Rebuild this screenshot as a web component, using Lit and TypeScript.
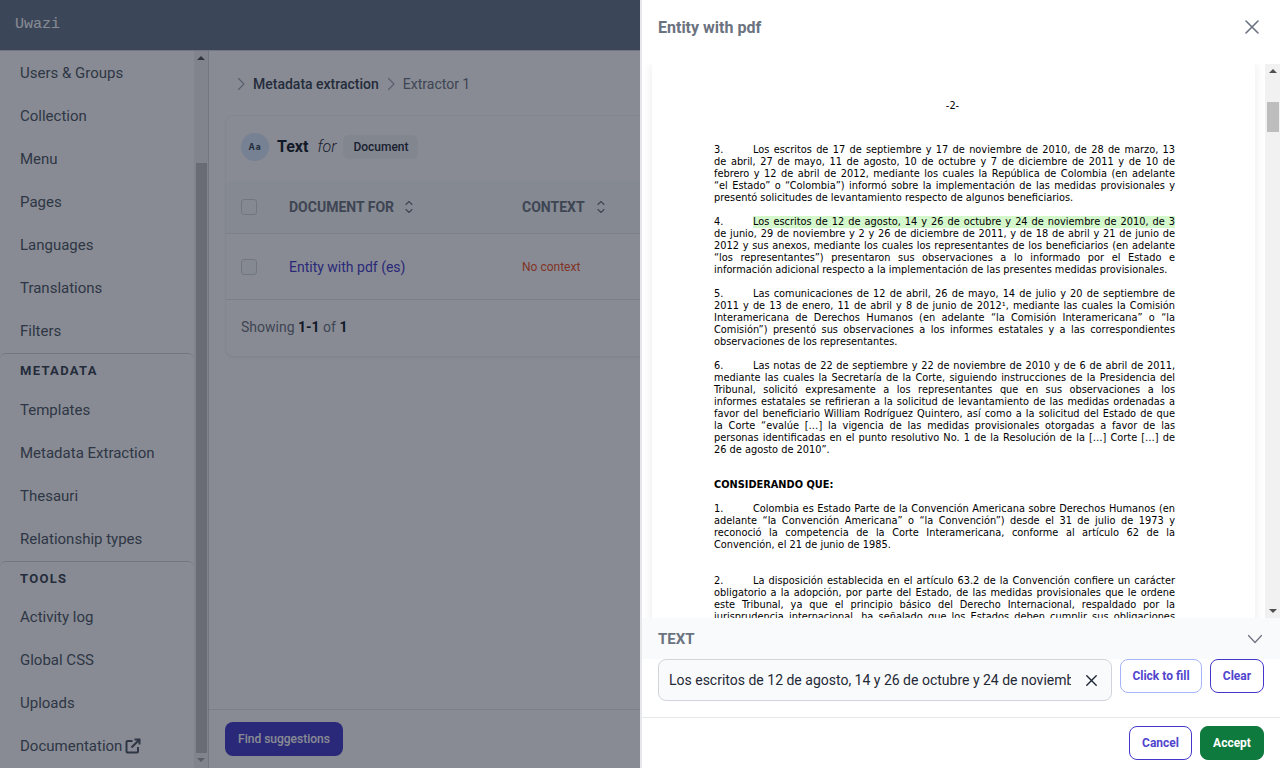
import { LitElement, html, css, svg } from "lit";
import { customElement } from "lit/decorators.js";

type Para = { lines: string[]; gap: number; indentNum?: string };

const paras: Para[] = [
  { gap: 0, indentNum: "3.", lines: [
    "Los escritos de 17 de septiembre y 17 de noviembre de 2010, de 28 de marzo, 13",
    "de abril, 27 de mayo, 11 de agosto, 10 de octubre y 7 de diciembre de 2011 y de 10 de",
    "febrero y 12 de abril de 2012, mediante los cuales la República de Colombia (en adelante",
    "“el Estado” o “Colombia”) informó sobre la implementación de las medidas provisionales y",
    "presentó solicitudes de levantamiento respecto de algunos beneficiarios."] },
  { gap: 12, indentNum: "4.", lines: [
    "@Los escritos de 12 de agosto, 14 y 26 de octubre y 24 de noviembre de 2010, de 3",
    "de junio, 29 de noviembre y 2 y 26 de diciembre de 2011, y de 18 de abril y 21 de junio de",
    "2012 y sus anexos, mediante los cuales los representantes de los beneficiarios (en adelante",
    "“los representantes”) presentaron sus observaciones a lo informado por el Estado e",
    "información adicional respecto a la implementación de las presentes medidas provisionales."] },
  { gap: 12, indentNum: "5.", lines: [
    "Las comunicaciones de 12 de abril, 26 de mayo, 14 de julio y 20 de septiembre de",
    "2011 y de 13 de enero, 11 de abril y 8 de junio de 2012¹, mediante las cuales la Comisión",
    "Interamericana de Derechos Humanos (en adelante “la Comisión Interamericana” o “la",
    "Comisión”) presentó sus observaciones a los informes estatales y a las correspondientes",
    "observaciones de los representantes."] },
  { gap: 12, indentNum: "6.", lines: [
    "Las notas de 22 de septiembre y 22 de noviembre de 2010 y de 6 de abril de 2011,",
    "mediante las cuales la Secretaría de la Corte, siguiendo instrucciones de la Presidencia del",
    "Tribunal, solicitó expresamente a los representantes que en sus observaciones a los",
    "informes estatales se refirieran a la solicitud de levantamiento de las medidas ordenadas a",
    "favor del beneficiario William Rodríguez Quintero, así como a la solicitud del Estado de que",
    "la Corte “evalúe […] la vigencia de las medidas provisionales otorgadas a favor de las",
    "personas identificadas en el punto resolutivo No. 1 de la Resolución de la […] Corte […] de",
    "26 de agosto de 2010”."] },
  { gap: 23, lines: ["#CONSIDERANDO QUE:"] },
  { gap: 12, indentNum: "1.", lines: [
    "Colombia es Estado Parte de la Convención Americana sobre Derechos Humanos (en",
    "adelante “la Convención Americana” o “la Convención”) desde el 31 de julio de 1973 y",
    "reconoció la competencia de la Corte Interamericana, conforme al artículo 62 de la",
    "Convención, el 21 de junio de 1985."] },
  { gap: 24, indentNum: "2.", lines: [
    "La disposición establecida en el artículo 63.2 de la Convención confiere un carácter",
    "obligatorio a la adopción, por parte del Estado, de las medidas provisionales que le ordene",
    "este Tribunal, ya que el principio básico del Derecho Internacional, respaldado por la",
    "jurisprudencia internacional, ha señalado que los Estados deben cumplir sus obligaciones"] },
];

const sort = svg`<svg class="sort" viewBox="0 0 10 16" width="10" height="16" fill="none" stroke="currentColor" stroke-width="1.1" stroke-linecap="round" stroke-linejoin="round"><path d="M2 5.5L5 2.5 8 5.5M2 10.5L5 13.5 8 10.5"/></svg>`;
const chev = svg`<svg class="chev" viewBox="0 0 8 14" width="8" height="14" fill="none" stroke="currentColor" stroke-width="1.1" stroke-linecap="round" stroke-linejoin="round"><path d="M1.5 1.5L7 7l-5.5 5.5"/></svg>`;
const x = (s: number, w = 1.6) => svg`<svg viewBox="0 0 14 14" width=${s} height=${s} fill="none" stroke="currentColor" stroke-width=${w} stroke-linecap="round"><path d="M1 1l12 12M13 1L1 13"/></svg>`;

@customElement("app-root")
export class AppRoot extends LitElement {
  static styles = css`
    :host { display: block; width: 1280px; height: 768px; position: relative; overflow: hidden; font-family: Roboto, sans-serif; background: #fff; }
    * { box-sizing: border-box; }
    .app { display: flex; flex-direction: column; height: 768px; }
    .nav { height: 51px; flex: none; background: #64748b; color: #fff; display: flex; align-items: center; padding: 0 0 2px 15px; font: 15px "Liberation Mono", monospace; border-bottom: 1px solid #d1d5db; }
    .body { flex: 1; display: flex; min-height: 0; }
    .side { width: 209px; flex: none; display: flex; border-right: 1px solid #d1d5db; background: #fff; overflow: hidden; }
    .menu { width: 194px; flex: none; }
    .item { height: 43px; display: flex; align-items: center; padding-left: 20px; font-size: 15px; color: #4b5563; gap: 3px; }
    .group { height: 35px; margin-top: 1px; border-top: 1px solid #d1d5db; border-radius: 6px 6px 0 0; padding: 9px 0 0 20px; font-size: 13px; line-height: 15px; font-weight: 700; letter-spacing: 1.3px; color: #374151; }
    .group.tools { height: 34px; }
    .sbar { width: 14px; flex: none; background: #f1f1f1; display: flex; flex-direction: column; align-items: center; }
    .tri-u { width: 0; height: 0; border: 4px solid transparent; border-top: 0; border-bottom: 4px solid #505050; }
    .tri-d { width: 0; height: 0; border: 4px solid transparent; border-bottom: 0; border-top: 4px solid #505050; }
    .side .tri-u { margin-top: 5px; }
    .side .thumb { margin-top: 103px; width: 11px; height: 590px; background: #c1c1c1; }
    .side .tri-d { margin-top: 5px; border-top-color: #a3a3a3; }
    .main { flex: 1; display: flex; flex-direction: column; min-width: 0; background: #fff; }
    .content { flex: 1; padding: 0 0 0 16px; min-height: 0; overflow: hidden; }
    .crumbs { height: 64px; display: flex; align-items: center; padding: 2px 0 0 12px; font-size: 14px; color: #6b7280; gap: 8px; }
    .crumbs b { font-weight: 500; color: #374151; }
    .chev { color: #9ca3af; }
    .card { width: 700px; height: 242px; border: 1px solid #f3f4f6; border-radius: 8px; box-shadow: 0 1px 2px rgba(0,0,0,.06); background: #fff; }
    .cap { height: 65px; display: flex; align-items: center; padding: 0 0 4px 15px; }
    .av { width: 28px; height: 28px; border-radius: 50%; background: #dbeafe; color: #374151; font-family: Inter, Roboto, sans-serif; font-size: 8.5px; font-weight: 700; display: flex; align-items: center; justify-content: center; letter-spacing: .9px; }
    .cap .t { font-size: 16px; font-weight: 700; color: #111827; margin-left: 8px; }
    .cap i { font-size: 16px; font-weight: 300; color: #1f2937; margin: 0 7px 0 9px; }
    .badge { height: 24px; width: 75px; background: #f3f4f6; border-radius: 6px; display: flex; align-items: center; justify-content: center; font-size: 12px; font-weight: 500; color: #1f2937; }
    .thead { height: 53px; background: #f9fafb; border-bottom: 1px solid #e5e7eb; display: flex; align-items: center; font-size: 14px; font-weight: 700; color: #6b7280; }
    .row { height: 66px; border-bottom: 1px solid #e5e7eb; display: flex; align-items: center; }
    .cb { width: 16px; height: 16px; border: 1px solid #d1d5db; border-radius: 3px; margin-left: 15px; flex: none; background: #f9fafb; }
    .c1 { width: 233px; margin-left: 32px; display: flex; align-items: center; gap: 10px; flex: none; }
    .c2 { display: flex; align-items: center; gap: 11px; }
    .sort { color: #6b7280; }
    .link { font-size: 14px; color: #4338ca; }
    .noctx { font-size: 12px; color: #f0501e; }
    .foot { height: 54px; display: flex; align-items: center; padding-left: 15px; font-size: 14px; color: #6b7280; }
    .foot span { white-space: pre; }
    .foot b { color: #111827; font-weight: 700; }
    .bar { height: 59px; flex: none; border-top: 1px solid #e5e7eb; padding: 12px 0 0 16px; }
    .find { width: 118px; height: 34px; border-radius: 8px; background: #4338ca; color: #fff; font-size: 12px; font-weight: 500; display: flex; align-items: center; justify-content: center; }
    .ext { color: #4b5563; }

    .overlay { position: absolute; inset: 0; background: rgba(17,24,39,.5); }
    .panel { position: absolute; top: 0; bottom: 0; right: 0; width: 640px; background: #fff; display: flex; flex-direction: column; border-left: 2px solid #e5e7eb; }
    .phead { height: 64px; flex: none; display: flex; align-items: center; justify-content: space-between; padding: 0 21px 10px 16px; font-size: 16px; font-weight: 700; color: #6b7280; }
    .phead .close { color: #6b7280; display: flex; }
    .pdfwrap { flex: 1; min-height: 0; display: flex; overflow: hidden; background: #fff; }
    .pdfbg { flex: 1; display: flex; align-items: flex-start; padding-left: 10px; padding-right: 10px; min-width: 0; overflow: hidden; }
    .page { width: 603px; flex: none; background: #fff; box-shadow: 0 0 10px rgba(0,0,0,.09); padding: 36px 0 0 62px; height: 900px; color: #000; font-family: "DejaVu Sans", sans-serif; font-size: 9.8px; line-height: 12px; }
    .pnum { width: 477px; text-align: center; height: 12px; margin-bottom: 32px; }
    .p { width: 461px; }
    .l { white-space: nowrap; text-align: justify; text-align-last: justify; height: 12px; }
    .l.last { text-align-last: left; }
    .first { display: flex; }
    .first .n { width: 39px; flex: none; }
    .first .tx { flex: 1; min-width: 0; text-align: justify; text-align-last: justify; white-space: nowrap; }
    .first .tx.hl { background: #d4f7cc; }
    .first .tx.last { text-align-last: left; }
    .pdfwrap > .sbar { width: 15px; background: #f1f1f1; }
    .pdfwrap .tri-u { margin-top: 5px; }
    .pdfwrap .thumb { margin-top: 29px; width: 12px; height: 30px; background: #bdbdbd; }
    .pdfwrap .sp { flex: 1; }
    .pdfwrap .tri-d { margin-bottom: 5px; }
    .sect { height: 41px; flex: none; background: #f9fafb; display: flex; align-items: center; justify-content: space-between; padding: 0 17px 0 16px; font-size: 15px; font-weight: 700; color: #6b7280; }
    .sect svg { color: #6b7280; }
    .inrow { height: 59px; flex: none; display: flex; align-items: flex-start; padding: 0 16px; gap: 8px; border-bottom: 1px solid #e5e7eb; }
    .input { width: 454px; height: 42px; border: 1px solid #d1d5db; background: #f9fafb; border-radius: 8px; display: flex; align-items: center; padding: 0 14px 0 10px; color: #1f2937; font-size: 14px; }
    .input span { width: 402px; overflow: hidden; white-space: nowrap; flex: none; }
    .input svg { margin-left: auto; color: #1f2937; }
    .btn { height: 34px; border-radius: 8px; border: 1px solid #4338ca; color: #5145cd; background: #fff; font-size: 12px; font-weight: 700; display: flex; align-items: center; justify-content: center; }
    .btn.fill { width: 82px; border-color: #a5b4fc; }
    .btn.clear { width: 54px; }
    .pfoot { height: 50px; flex: none; display: flex; justify-content: flex-end; padding: 8px 16px 0 0; gap: 8px; }
    .btn.cancel { width: 63px; }
    .btn.accept { width: 64px; background: #0e7a3e; border-color: #0e7a3e; color: #fff; }
  `;

  private renderPara(p: Para) {
    const [first, ...rest] = p.lines;
    const only = rest.length === 0;
    if (!p.indentNum) {
      return html`<div class="p" style="margin-top:${p.gap}px"><div class="l last"><b>${first.replace("#", "")}</b></div></div>`;
    }
    const hl = first.startsWith("@");
    return html`<div class="p" style="margin-top:${p.gap}px">
      <div class="first"><span class="n">${p.indentNum}</span><span class="tx ${hl ? "hl" : ""} ${only ? "last" : ""}">${first.replace("@", "")}</span></div>
      ${rest.map((l, i) => html`<div class="l ${i === rest.length - 1 && p.indentNum !== "2." ? "last" : ""}">${l}</div>`)}
    </div>`;
  }

  render() {
    const top = ["Users & Groups", "Collection", "Menu", "Pages", "Languages", "Translations", "Filters"];
    const meta = ["Templates", "Metadata Extraction", "Thesauri", "Relationship types"];
    const tools = ["Activity log", "Global CSS", "Uploads"];
    const item = (t: string) => html`<div class="item">${t}</div>`;
    return html`
      <div class="app">
        <div class="nav">Uwazi</div>
        <div class="body">
          <div class="side">
            <div class="menu">
              ${top.map(item)}
              <div class="group">METADATA</div>
              ${meta.map(item)}
              <div class="group tools">TOOLS</div>
              ${tools.map(item)}
              <div class="item">Documentation
                <svg class="ext" viewBox="0 0 16 16" width="16" height="16" fill="none" stroke="currentColor" stroke-width="2"><path d="M7.5 3H2.5a1 1 0 0 0-1 1v9.5a1 1 0 0 0 1 1H12a1 1 0 0 0 1-1V9"/><path d="M6.5 9.5L14 2M9.5 1.5h5v5" /></svg>
              </div>
            </div>
            <div class="sbar"><div class="tri-u"></div><div class="thumb"></div><div class="tri-d"></div></div>
          </div>
          <div class="main">
            <div class="content">
              <div class="crumbs">${chev}<b>Metadata extraction</b>${chev}<span>Extractor 1</span></div>
              <div class="card">
                <div class="cap"><div class="av">Aa</div><span class="t">Text</span><i>for</i><div class="badge">Document</div></div>
                <div class="thead"><div class="cb"></div><div class="c1">DOCUMENT FOR ${sort}</div><div class="c2">CONTEXT ${sort}</div></div>
                <div class="row"><div class="cb"></div><div class="c1"><span class="link">Entity with pdf (es)</span></div><div class="c2"><span class="noctx">No context</span></div></div>
                <div class="foot"><span>Showing <b>1-1</b> of <b>1</b></span></div>
              </div>
            </div>
            <div class="bar"><div class="find">Find suggestions</div></div>
          </div>
        </div>
      </div>
      <div class="overlay"></div>
      <div class="panel">
        <div class="phead"><span>Entity with pdf</span><span class="close">${x(14)}</span></div>
        <div class="pdfwrap">
          <div class="pdfbg">
            <div class="page">
              <div class="pnum">-2-</div>
              ${paras.map((p) => this.renderPara(p))}
            </div>
          </div>
          <div class="sbar"><div class="tri-u"></div><div class="thumb"></div><div class="sp"></div><div class="tri-d"></div></div>
        </div>
        <div class="sect"><span>TEXT</span><svg viewBox="0 0 16 10" width="16" height="10" fill="none" stroke="currentColor" stroke-width="1.2" stroke-linecap="round" stroke-linejoin="round"><path d="M1.5 1.5L8 8.5l6.5-7"/></svg></div>
        <div class="inrow">
          <div class="input"><span>Los escritos de 12 de agosto, 14 y 26 de octubre y 24 de noviembre de 2010, de 3</span>${x(11, 1.8)}</div>
          <div class="btn fill">Click to fill</div>
          <div class="btn clear">Clear</div>
        </div>
        <div class="pfoot"><div class="btn cancel">Cancel</div><div class="btn accept">Accept</div></div>
      </div>
    `;
  }
}
